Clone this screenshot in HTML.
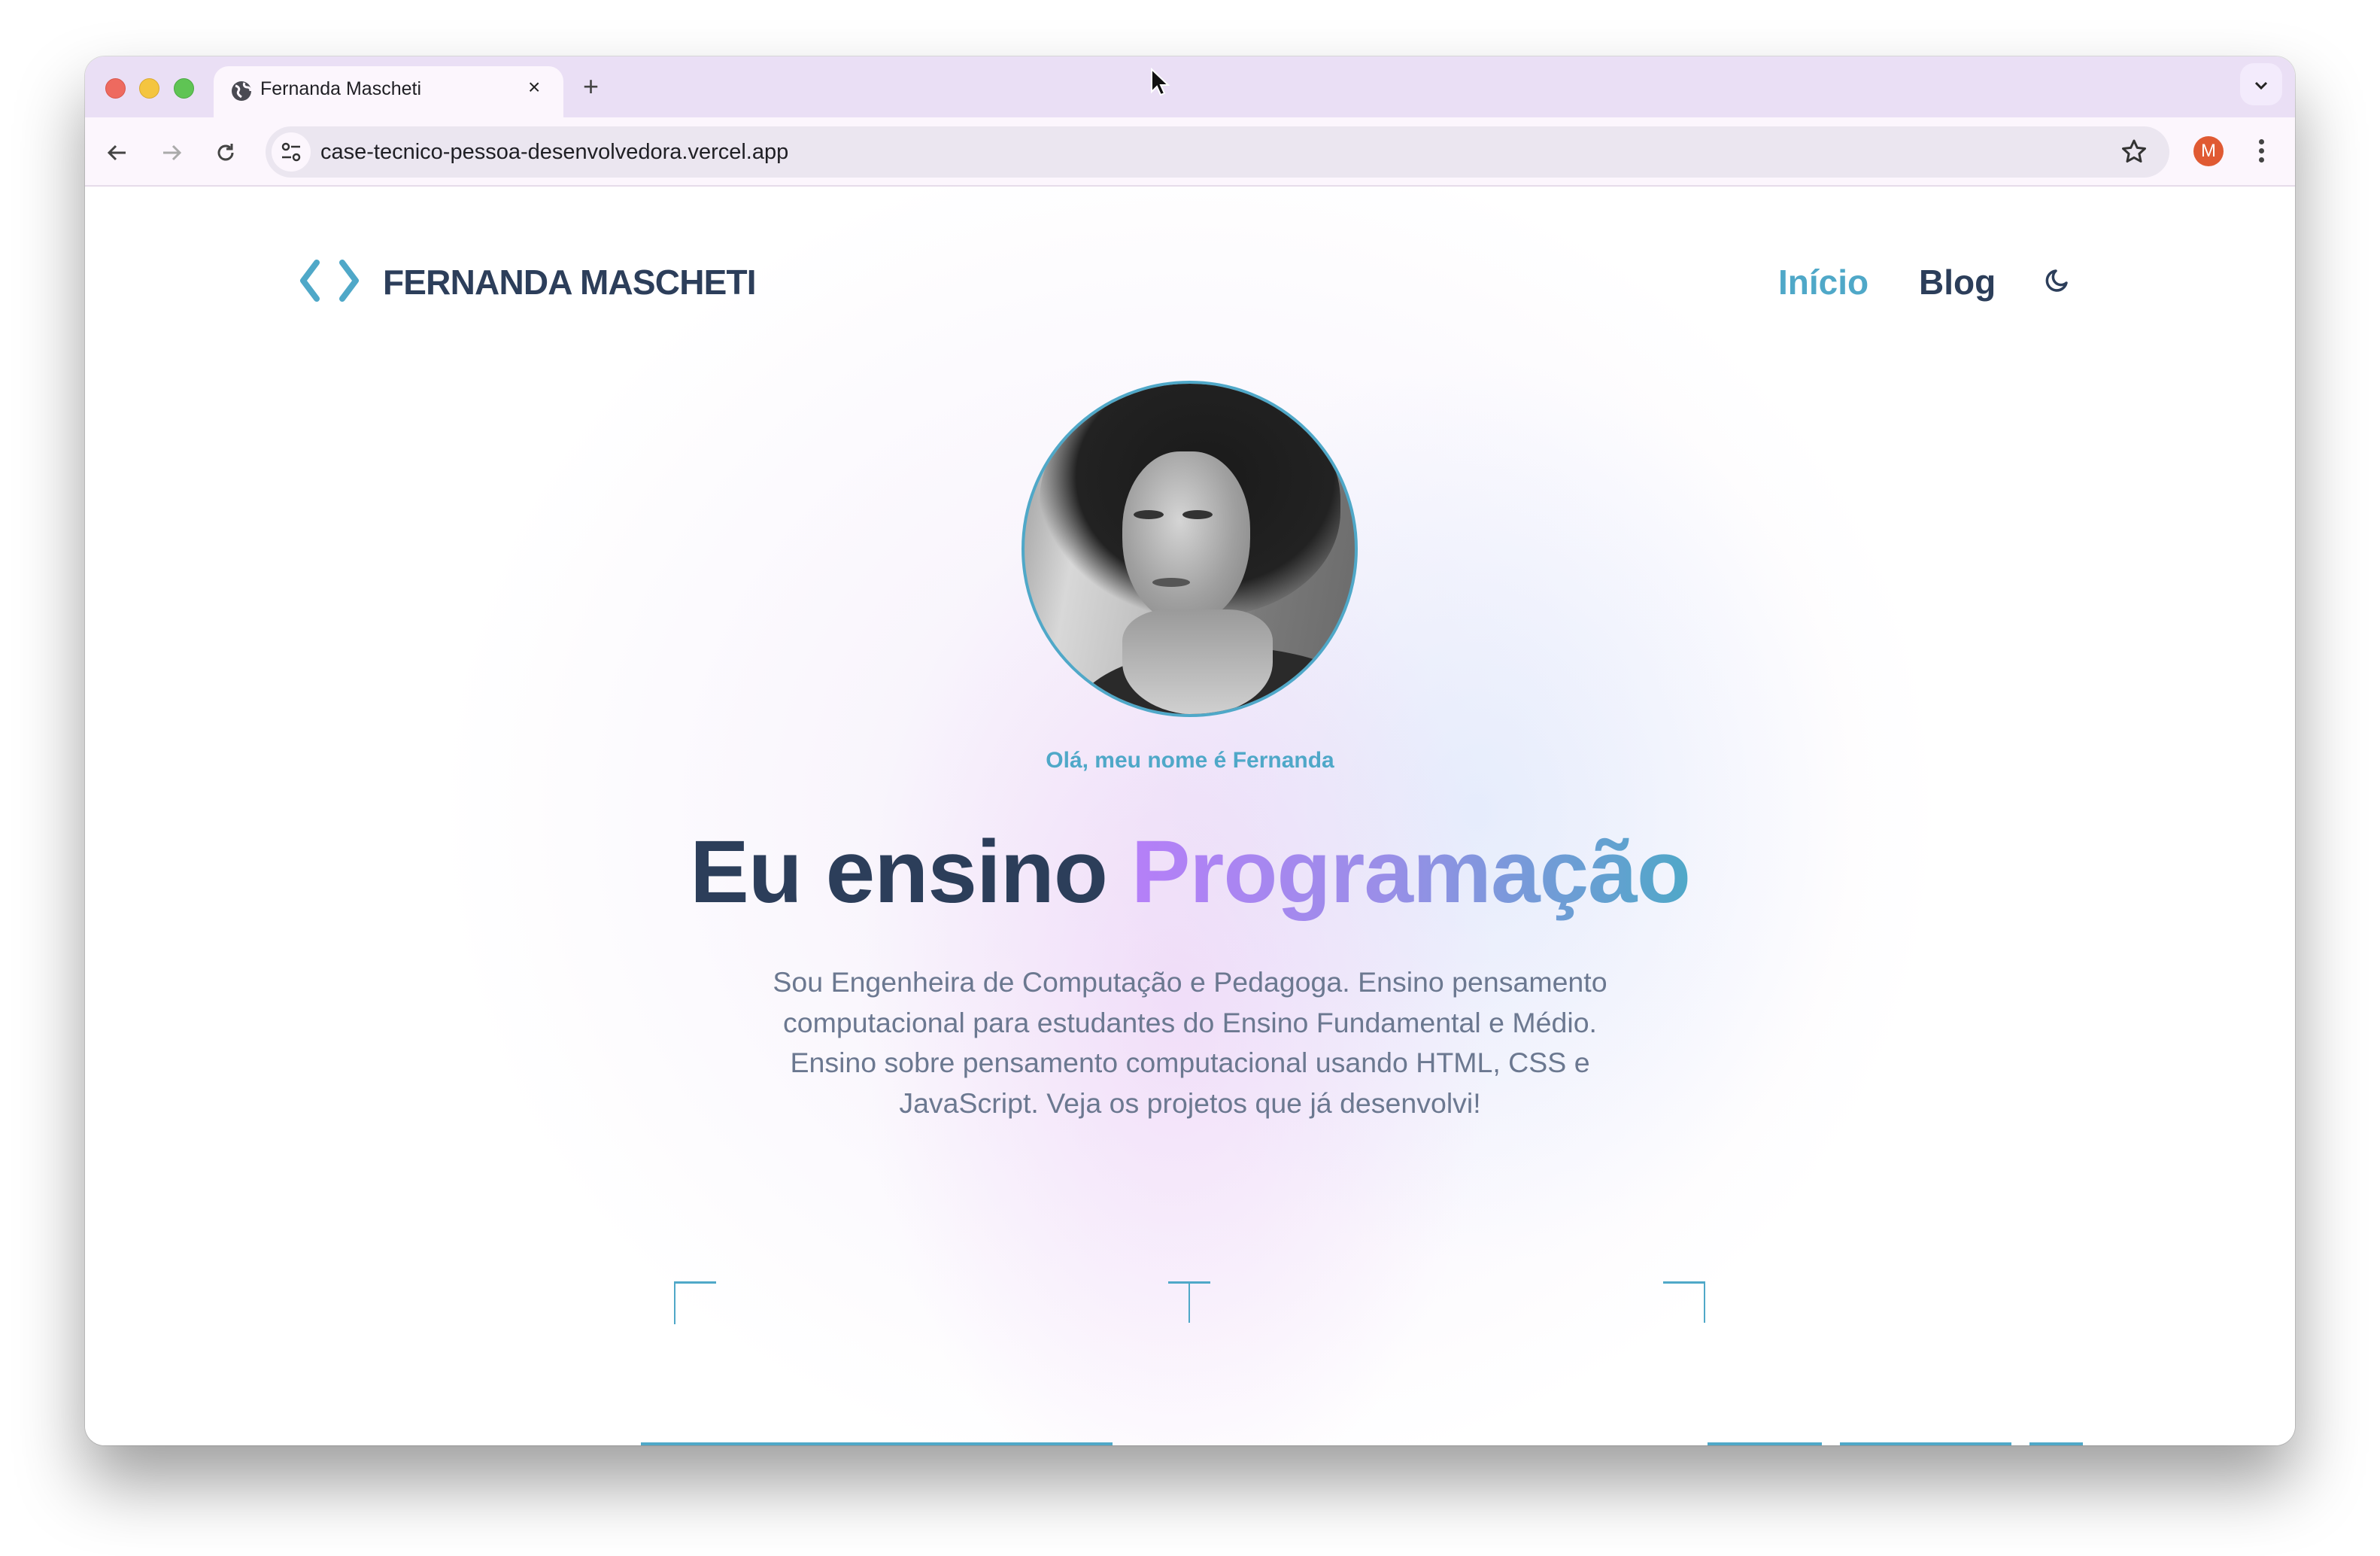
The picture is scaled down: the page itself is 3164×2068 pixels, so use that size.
<!DOCTYPE html>
<html><head><meta charset="utf-8">
<style>
*{margin:0;padding:0;box-sizing:border-box}
html,body{width:3164px;height:2068px;background:#fff;overflow:hidden;font-family:"Liberation Sans",sans-serif}
.win{position:absolute;left:113px;top:75px;width:2938px;height:1846px;border-radius:26px;overflow:hidden;background:#fff;box-shadow:0 50px 90px rgba(0,0,0,.38),0 0 0 1px rgba(0,0,0,.12)}
.tabbar{position:absolute;left:0;top:0;width:100%;height:81px;background:#eadff5}
.dot{position:absolute;top:29px;width:27px;height:27px;border-radius:50%}
.tab{position:absolute;left:171px;top:13px;width:465px;height:70px;background:#fcf6fd;border-radius:20px 20px 0 0}
.toolbar{position:absolute;left:0;top:81px;width:100%;height:92px;background:#fcf6fd;border-bottom:2px solid #e6dcea}
.url{position:absolute;left:240px;top:12px;width:2531px;height:68px;border-radius:34px;background:#ebe6f0}
.content{position:absolute;left:0;top:174px;width:100%;height:1672px;overflow:hidden;
background:
radial-gradient(ellipse 420px 700px at 1450px 1080px,rgba(236,205,246,.55),rgba(236,205,246,0) 100%),
radial-gradient(ellipse 500px 600px at 1850px 830px,rgba(215,230,252,.55),rgba(215,230,252,0) 100%),
radial-gradient(ellipse 1000px 900px at 1470px 830px,rgba(243,236,250,.9),rgba(255,255,255,0) 100%),#fff}
.t{position:absolute;white-space:nowrap}
.line{position:absolute;background:#4fa8c8}
</style></head><body>
<div class="win">
 <div class="tabbar">
  <div class="dot" style="left:27px;background:#ee6a5f;border:1px solid #d8564c"></div>
  <div class="dot" style="left:72px;background:#f4c540;border:1px solid #d9a92f"></div>
  <div class="dot" style="left:118px;background:#5fc454;border:1px solid #4aa841"></div>
  <div class="tab">
   <svg style="position:absolute;left:22px;top:18px" width="30" height="30" viewBox="0 0 30 30"><circle cx="15" cy="15" r="13" fill="#4a4a52"/><path d="M7 8c4 1 6 4 4 7s1 6 4 8M19 4c-2 4 1 6 4 6s4 3 4 5" stroke="#fcf6fd" stroke-width="3" fill="none"/></svg>
   <div class="t" style="left:62px;top:16px;font-size:25px;color:#1f1f24">Fernanda Mascheti</div>
   <div class="t" style="left:418px;top:12px;font-size:28px;color:#222">×</div>
  </div>
  <div class="t" style="left:662px;top:22px;font-size:36px;color:#444;line-height:36px">+</div>
  <div style="position:absolute;left:2865px;top:9px;width:56px;height:56px;border-radius:18px;background:#f3ebfc"></div>
  <svg style="position:absolute;left:2883px;top:32px" width="20" height="14" viewBox="0 0 20 14"><path d="M3 3l7 7 7-7" stroke="#222" stroke-width="3" fill="none"/></svg>
 </div>
 <div class="toolbar">
  <svg style="position:absolute;left:28px;top:32px" width="30" height="30" viewBox="0 0 30 30"><path d="M26 15H5M13 6l-9 9 9 9" stroke="#444" stroke-width="3" fill="none"/></svg>
  <svg style="position:absolute;left:100px;top:32px" width="30" height="30" viewBox="0 0 30 30"><path d="M4 15h21M17 6l9 9-9 9" stroke="#aaa" stroke-width="3" fill="none"/></svg>
  <svg style="position:absolute;left:172px;top:32px" width="30" height="30" viewBox="0 0 30 30"><path d="M24 15a9 9 0 1 1-3-6.7" stroke="#444" stroke-width="3" fill="none"/><path d="M23 3v7h-7" stroke="#444" stroke-width="3" fill="none"/></svg>
  <div class="url">
   <div style="position:absolute;left:8px;top:8px;width:52px;height:52px;border-radius:50%;background:#fcf6fd"></div>
   <svg style="position:absolute;left:20px;top:20px" width="28" height="28" viewBox="0 0 28 28"><circle cx="7" cy="7" r="4" stroke="#333" stroke-width="2.5" fill="none"/><path d="M14 7h12M2 21h12" stroke="#333" stroke-width="2.5"/><circle cx="21" cy="21" r="4" stroke="#333" stroke-width="2.5" fill="none"/></svg>
   <div class="t" style="left:73px;top:18px;font-size:29px;color:#1f1f24">case-tecnico-pessoa-desenvolvedora.vercel.app</div>
   <svg style="position:absolute;left:2466px;top:16px" width="36" height="36" viewBox="0 0 36 36"><path d="M18 3l4.3 9.4 10.2 1.1-7.6 6.9 2.1 10.1L18 25.4 9 30.5l2.1-10.1-7.6-6.9 10.2-1.1z" stroke="#333" stroke-width="3" fill="none" stroke-linejoin="round"/></svg>
  </div>
  <div style="position:absolute;left:2803px;top:25px;width:40px;height:40px;border-radius:50%;background:#e05a33;color:#fff;font-size:24px;text-align:center;line-height:40px">M</div>
  <div style="position:absolute;left:2890px;top:29px;width:7px;height:7px;border-radius:50%;background:#444;box-shadow:0 12px 0 #444,0 24px 0 #444"></div>
 </div>
 <div class="content">
  <svg style="position:absolute;left:285px;top:96px" width="80" height="56" viewBox="0 0 80 56"><path d="M23 4L5 28l18 24M57 4l18 24-18 24" stroke="#4fa8c8" stroke-width="8" fill="none" stroke-linecap="round" stroke-linejoin="round"/></svg>
  <div class="t" style="left:396px;top:99px;font-size:46px;font-weight:bold;color:#2c3e5a;letter-spacing:-0.8px">FERNANDA MASCHETI</div>
  <div class="t" style="left:2251px;top:99px;font-size:46px;font-weight:bold;color:#4fa8c8">Início</div>
  <div class="t" style="left:2438px;top:99px;font-size:46px;font-weight:bold;color:#2c3e5a">Blog</div>
  <svg style="position:absolute;left:2600px;top:106px" width="40" height="40" viewBox="0 0 40 40"><path d="M20 5a13 13 0 1 0 14 16A10 10 0 0 1 20 5z" stroke="#2c3e5a" stroke-width="3.5" fill="none" stroke-linejoin="round"/></svg>
  <!-- photo -->
  <div style="position:absolute;left:1245px;top:257px;width:447px;height:447px;border-radius:50%;border:4px solid #4fa8c8;overflow:hidden;background:linear-gradient(100deg,#9a9a9a 0%,#d8d8d8 20%,#bdbdbd 45%,#7a7a7a 70%,#6a6a6a 100%)">
   <div style="position:absolute;left:20px;top:0;width:400px;height:310px;border-radius:50% 50% 45% 45%;background:radial-gradient(ellipse at 55% 40%,#1a1a1a,#222 55%,rgba(30,30,30,0) 72%)"></div>
   <div style="position:absolute;left:130px;top:90px;width:170px;height:230px;border-radius:45% 45% 50% 50%;background:radial-gradient(ellipse at 45% 40%,#d5d5d5,#a0a0a0 55%,#7e7e7e 100%)"></div>
   <div style="position:absolute;left:145px;top:168px;width:40px;height:12px;border-radius:50%;background:#333"></div>
   <div style="position:absolute;left:210px;top:168px;width:40px;height:12px;border-radius:50%;background:#333"></div>
   <div style="position:absolute;left:170px;top:258px;width:50px;height:12px;border-radius:50%;background:#555"></div>
   <div style="position:absolute;left:60px;top:350px;width:420px;height:200px;border-radius:50% 50% 0 0;background:#2a2a2a"></div>
   <div style="position:absolute;left:130px;top:300px;width:200px;height:140px;border-radius:30% 30% 50% 50%;background:linear-gradient(180deg,#9a9a9a,#d0d0d0)"></div>
  </div>
  <div class="t" style="left:0;width:100%;text-align:center;top:745px;font-size:30px;font-weight:bold;color:#4fa8c8">Olá, meu nome é Fernanda</div>
  <div class="t" style="left:0;width:100%;text-align:center;top:840px;font-size:118px;font-weight:bold;letter-spacing:-1px;line-height:140px;color:#2c3e5a">Eu ensino <span style="background:linear-gradient(90deg,#b57ff8,#9a8ee8 45%,#4fa8c8);-webkit-background-clip:text;background-clip:text;color:transparent">Programação</span></div>
  <div class="t" style="left:0;width:100%;text-align:center;top:1030px;font-size:37.5px;line-height:53.5px;color:#6b7890">Sou Engenheira de Computação e Pedagoga. Ensino pensamento<br>computacional para estudantes do Ensino Fundamental e Médio.<br>Ensino sobre pensamento computacional usando HTML, CSS e<br>JavaScript. Veja os projetos que já desenvolvi!</div>
  <div class="line" style="left:783px;top:1454px;width:56px;height:3px"></div>
  <div class="line" style="left:783px;top:1454px;width:2px;height:57px"></div>
  <div class="line" style="left:1440px;top:1454px;width:56px;height:3px"></div>
  <div class="line" style="left:1467px;top:1454px;width:2px;height:55px"></div>
  <div class="line" style="left:2098px;top:1454px;width:56px;height:3px"></div>
  <div class="line" style="left:2152px;top:1454px;width:2px;height:55px"></div>
  <div class="line" style="left:739px;top:1668px;width:627px;height:4px"></div>
  <div class="line" style="left:2157px;top:1668px;width:152px;height:4px"></div>
  <div class="line" style="left:2333px;top:1668px;width:228px;height:4px"></div>
  <div class="line" style="left:2585px;top:1668px;width:71px;height:4px"></div>
 </div>
</div>
<svg style="position:absolute;left:1528px;top:90px" width="28" height="40" viewBox="0 0 28 40"><path d="M3 2v30l7-7 5 11 5-2-5-11h10z" fill="#111" stroke="#fff" stroke-width="2"/></svg>
</body></html>
